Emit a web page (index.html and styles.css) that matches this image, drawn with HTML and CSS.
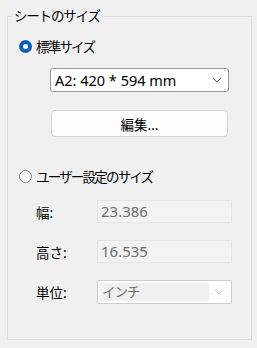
FILE: index.html
```html
<!DOCTYPE html>
<html lang="ja">
<head>
    <meta charset="UTF-8">
    <title>シートのサイズ</title>
    <link rel="stylesheet" href="styles.css">
</head>
<body>
    <fieldset class="group">
        <legend>シートのサイズ</legend>
        <div class="group-body">
            <label class="radio-row">
                <span class="radio checked"></span>
                <span class="jp">標準サイズ</span>
            </label>

            <div class="select">
                <span class="select-text">A2: 420 * 594 mm</span>
                <svg class="chevron" width="10" height="6" viewBox="0 0 10 6"><path d="M1 1 L5 5 L9 1" fill="none" stroke="#606060" stroke-width="1"/></svg>
            </div>

            <button type="button" class="btn">編集...</button>

            <label class="radio-row second">
                <span class="radio"></span>
                <span class="jp">ユーザー設定のサイズ</span>
            </label>

            <div class="custom">
                <span class="label">幅:</span>
                <div class="field">23.386</div>

                <span class="label">高さ:</span>
                <div class="field">16.535</div>

                <span class="label">単位:</span>
                <div class="combo">
                    <span class="combo-text">インチ</span>
                    <span class="combo-arrow">
                        <svg width="10" height="6" viewBox="0 0 10 6"><path d="M1 1 L5 5 L9 1" fill="none" stroke="#c4c4c4" stroke-width="1"/></svg>
                    </span>
                </div>
            </div>
        </div>
    </fieldset>
</body>
</html>
```

FILE: styles.css
```css
body {
    margin: 0;
    background: #f0f0f0;
    font-family: "Noto Sans", "Noto Sans CJK JP", sans-serif;
    font-size: 13px;
    color: #000;
}
.group {
    margin: 7px 5px 7px 7px;
    padding: 0;
    border: 1px solid #dcdcdc;
}
.group legend {
    margin-left: 4px;
    padding: 0 2px;
    line-height: 18px;
    font-size: 13.5px;
    letter-spacing: -1.2px;
}
.group-body {
    padding: 11px 0 35px 0;
}
.radio-row {
    display: flex;
    align-items: center;
    gap: 4px;
    height: 20px;
    margin-left: 11px;
    font-size: 13.5px;
}
.radio-row .jp {
    letter-spacing: -1.8px;
}
.radio-row.second {
    margin-top: 29px;
}
.radio {
    width: 13px;
    height: 13px;
    box-sizing: border-box;
    border-radius: 50%;
    border: 1px solid #858585;
    background: #f7f7f7;
}
.radio.checked {
    border: 4px solid #0a5fbd;
    background: #fff;
}
.select {
    display: flex;
    align-items: center;
    justify-content: space-between;
    box-sizing: border-box;
    width: 179px;
    height: 24px;
    margin: 12px 0 0 42px;
    padding: 0 6px 0 4px;
    background: #fff;
    border: 1px solid #9a9a9a;
    border-radius: 3px;
    font-size: 14.5px;
}
.btn {
    display: block;
    width: 177px;
    height: 27px;
    margin: 18px 0 0 43px;
    background: #fdfdfd;
    border: 1px solid #d4d4d4;
    border-radius: 4px;
    font-family: inherit;
    font-size: 13.5px;
    color: #000;
}
.custom {
    display: grid;
    grid-template-columns: 61px 135px;
    row-gap: 17px;
    margin: 14px 0 0 28px;
    align-items: center;
}
.label {
    font-size: 13.5px;
}
.field {
    box-sizing: border-box;
    height: 23px;
    padding: 0 3px;
    line-height: 21px;
    background: #f3f3f3;
    border: 1px solid #e4e4e4;
    color: #6d6d6d;
    font-size: 15px;
}
.combo {
    display: flex;
    box-sizing: border-box;
    height: 24px;
    padding: 2px;
    background: #fff;
    border: 1px solid #cccccc;
    border-radius: 2px;
    color: #6d6d6d;
    font-size: 13.5px;
    letter-spacing: -1px;
}
.combo-text {
    flex: 1;
    background: #f0f0f0;
    padding-left: 2px;
    line-height: 18px;
}
.combo-arrow {
    width: 20px;
    display: flex;
    align-items: center;
    justify-content: center;
}
```
